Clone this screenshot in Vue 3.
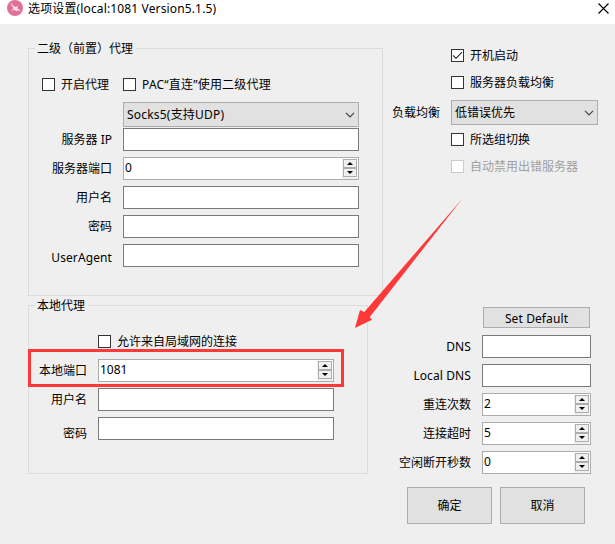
<script setup>
import { h, reactive } from 'vue'

const form = reactive({
  upstreamPort: 0,
  localPort: 1081,
  reconnect: 2,
  timeout: 5,
  idle: 0,
})

const Check = (props) =>
  h('span', { class: ['check', { disabled: props.disabled }] }, [
    h('span', { class: 'box' }, props.checked
      ? [h('svg', { viewBox: '0 0 11 11', width: 11, height: 11 }, [
          h('path', { d: 'M1 5.3 L4 8.3 L10 2.2', fill: 'none', stroke: '#333', 'stroke-width': 1.2 }),
        ])]
      : []),
    h('span', { class: 'caption' }, props.label),
  ])
Check.props = ['label', 'checked', 'disabled']

const Combo = (props) =>
  h('div', { class: 'combo' }, [
    h('span', props.value),
    h('svg', { viewBox: '0 0 10 6', width: 10, height: 6 }, [
      h('path', { d: 'M1 0.8 L5 4.8 L9 0.8', fill: 'none', stroke: '#444', 'stroke-width': 1.2 }),
    ]),
  ])
Combo.props = ['value']

const arrow = (d) =>
  h('span', { class: 'step' }, [
    h('svg', { viewBox: '0 0 12 7', width: 12, height: 7 }, [h('path', { d, fill: '#000' })]),
  ])
const Spin = (props) =>
  h('div', { class: 'field spin' }, [
    h('span', String(props.value)),
    h('span', { class: 'steps' }, [arrow('M3.5 5V4h1V3h1V2h1v1h1v1h1v1z'), arrow('M3.5 2v1h1v1h1v1h1V4h1V3h1V2z')]),
  ])
Spin.props = ['value']
</script>

<template>
  <div class="window">
    <header class="titlebar">
      <svg class="logo" viewBox="0 0 16 17" width="16" height="17">
        <circle cx="8" cy="8" r="8" fill="#e0709a" />
        <path d="M3 2.5 L8 7 L10.8 6.2 L10.6 8.4 L14 11.2 L10.2 10.2 L9.2 11.4 L7.8 9.8 L4.2 10.8 L6.6 8.4 Z" fill="#f8e3eb" />
      </svg>
      <h1>选项设置(local:1081 Version5.1.5)</h1>
      <svg class="close" viewBox="0 0 11 11" width="11" height="11">
        <path d="M0.5 0.5 L10.5 10.5 M10.5 0.5 L0.5 10.5" stroke="#000" stroke-width="1.15" />
      </svg>
    </header>

    <main>
      <div class="left">
        <fieldset class="upstream">
          <legend>二级（前置）代理</legend>
          <div class="checks">
            <Check label="开启代理" />
            <Check class="wide" label="PAC“直连”使用二级代理" />
          </div>
          <Combo class="protocol wide" value="Socks5(支持UDP)" />
          <div class="rows">
            <div class="row"><label>服务器 IP</label><div class="field"></div></div>
            <div class="row"><label>服务器端口</label><Spin :value="form.upstreamPort" /></div>
            <div class="row"><label>用户名</label><div class="field"></div></div>
            <div class="row"><label>密码</label><div class="field"></div></div>
            <div class="row"><label class="agent">UserAgent</label><div class="field"></div></div>
          </div>
        </fieldset>

        <fieldset class="local">
          <legend>本地代理</legend>
          <Check class="lan" label="允许来自局域网的连接" />
          <div class="rows">
            <div class="row marked"><label>本地端口</label><Spin :value="form.localPort" /></div>
            <div class="row"><label>用户名</label><div class="field"></div></div>
            <div class="row"><label class="secret">密码</label><div class="field"></div></div>
          </div>
        </fieldset>
      </div>

      <div class="right">
        <div class="options">
          <Check label="开机启动" checked="true" />
          <Check label="服务器负载均衡" />
          <div class="balance"><label>负载均衡</label><Combo value="低错误优先" /></div>
          <Check label="所选组切换" />
          <Check label="自动禁用出错服务器" disabled="true" />
        </div>

        <button class="default">Set Default</button>
        <div class="rows">
          <div class="row"><label class="latin">DNS</label><div class="field"></div></div>
          <div class="row"><label class="latin">Local DNS</label><div class="field"></div></div>
          <div class="row"><label>重连次数</label><Spin :value="form.reconnect" /></div>
          <div class="row"><label>连接超时</label><Spin :value="form.timeout" /></div>
          <div class="row"><label>空闲断开秒数</label><Spin :value="form.idle" /></div>
        </div>
        <div class="actions">
          <button>确定</button>
          <button>取消</button>
        </div>
      </div>
    </main>

    <svg class="pointer" viewBox="0 0 110 132" width="110" height="132">
      <path d="M1 130 L6 112 L10.3 114 L108.5 0.5 L15.8 119 L18 121.8 Z" fill="#ff3838" />
    </svg>
  </div>
</template>

<style>
body {
  margin: 0;
}
</style>

<style scoped>
.window {
  position: relative;
  width: 615px;
  height: 544px;
  overflow: hidden;
  background: #efefef;
  color: #000;
  font: 12px/17px "Noto Sans", "Noto Sans CJK SC", sans-serif;
  white-space: nowrap;
}
.window :deep(*) {
  box-sizing: border-box;
}
.window :deep(svg) {
  display: block;
  flex: none;
}
.titlebar {
  display: flex;
  height: 24px;
  padding: 0 6px 0 7px;
  background: #fff;
}
h1 {
  margin: 0 auto 0 5px;
  font-size: 12px;
  font-weight: 400;
  line-height: 17px;
  letter-spacing: 0.14px;
}
.close {
  margin-top: 3px;
}
main {
  display: flex;
  padding: 16px 0 0 28px;
}
.left {
  display: flex;
  flex-direction: column;
  gap: 1px;
  width: 355px;
}
fieldset {
  margin: 0;
  padding: 0;
  min-width: 0;
  border: 1px solid #dcdcdc;
}
legend {
  height: 17px;
  margin-left: 6px;
  padding: 0 3px 0 2px;
}
.upstream {
  height: 256px;
}
.local {
  width: 340px;
  height: 177px;
}
.checks {
  display: flex;
  gap: 14px;
  margin: 21px 0 11px 13px;
}
.window :deep(.check) {
  display: flex;
  align-items: center;
  gap: 6px;
  height: 13px;
}
.window :deep(.box) {
  flex: none;
  width: 13px;
  height: 13px;
  border: 1px solid #333;
  background: #fff;
}
.window :deep(.disabled) {
  color: #a0a0a0;
}
.window :deep(.disabled .box) {
  border-color: #ccc;
}
.window :deep(.combo) {
  display: flex;
  align-items: center;
  justify-content: space-between;
  height: 25px;
  padding: 0 3px;
  border: 1px solid #adadad;
  background: #e1e1e1;
}
.wide {
  letter-spacing: 0.2px;
}
.latin,
.agent {
  letter-spacing: 0.1px;
}
.protocol {
  width: 236px;
  margin: 0 0 1px 94px;
}
.rows {
  display: flex;
  flex-direction: column;
  gap: 6px;
}
.row {
  display: flex;
  align-items: center;
  justify-content: flex-end;
  gap: 11px;
  height: 23px;
}
.upstream .row {
  width: 330px;
}
.local .row {
  width: 305px;
}
.window :deep(.field) {
  display: flex;
  justify-content: space-between;
  width: 236px;
  height: 23px;
  padding: 2px 1px;
  border: 1px solid #7a7a7a;
  background: #fff;
}
.window :deep(.spin) {
  padding: 1px;
  border-color: #adadad;
}
.window :deep(.steps) {
  width: 15px;
  height: 20px;
  padding: 0 0 1px 1px;
  background: #f0f0f0;
}
.window :deep(.step) {
  display: block;
  width: 14px;
  height: 9px;
  border: 1px solid #adadad;
  background: #f0f0f0;
}
.agent {
  padding-top: 3px;
}
.lan {
  margin: 21px 0 11px 69px;
}
.secret {
  padding-top: 10px;
}
.marked {
  position: relative;
}
.marked::after {
  content: "";
  position: absolute;
  box-sizing: border-box;
  left: -1px;
  top: -10px;
  width: 316px;
  height: 38px;
  border: 3px solid #ff3838;
}
.right {
  width: 215px;
  padding-top: 9px;
}
.options {
  display: flex;
  flex-direction: column;
  padding-left: 68px;
}
.options > :first-child {
  margin-bottom: 14px;
}
.options > :last-child {
  margin-top: 14px;
}
.balance {
  display: flex;
  align-items: center;
  justify-content: flex-end;
  gap: 11px;
  width: 147px;
  margin: 11px 0 8px;
}
.balance :deep(.combo) {
  flex: none;
  width: 147px;
}
button {
  padding: 0;
  border: 1px solid #adadad;
  background: #e1e1e1;
  color: inherit;
  font: inherit;
}
.default {
  display: block;
  width: 107px;
  height: 21px;
  margin: 134px 0 7px 100px;
  padding-top: 1px;
  letter-spacing: 0.1px;
}
.right .row {
  width: 208px;
}
.right .row :deep(.field) {
  width: 109px;
}
.actions {
  display: flex;
  gap: 8px;
  margin: 13px 0 0 24px;
}
.actions button {
  width: 85px;
  height: 37px;
}
.pointer {
  position: absolute;
  left: 354px;
  top: 198px;
}
</style>
